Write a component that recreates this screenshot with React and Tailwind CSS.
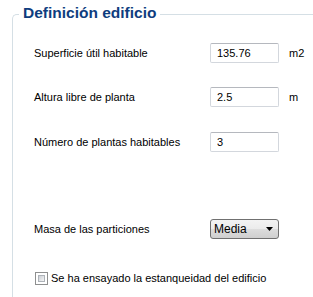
import React from 'react'

const font = { fontFamily: '"Liberation Sans", Arial, sans-serif' };

const Field = ({ label, value, unit, className = '' }) => (
  <div className={`flex items-center h-[20px] ${className}`}>
    <span className="w-[176px] shrink-0 text-[11px] text-black">{label}</span>
    <input
      readOnly
      value={value}
      className="w-[69px] h-[20px] px-[6px] text-[11px] text-black bg-white border border-[#d3d7dd] border-t-[#b5b8be] rounded-[2px] outline-none"
      style={font}
    />
    {unit && <span className="ml-[10px] text-[11px] text-black">{unit}</span>}
  </div>
);

export default function App() {
  return (
    <div className="w-[313px] h-[297px] overflow-hidden bg-white" style={font}>
      <div className="ml-[12px] mt-[14px] h-[300px] border-l border-t border-[#d5dfe5] rounded-tl-[5px]">
        <div className="-mt-[11px] ml-[6px] px-[4px] w-fit bg-white text-[15.5px] leading-[18px] font-bold text-[#0e3d7e]">
          Definición edificio
        </div>

        <div className="pl-[21px] pt-[21px]">
          <Field label="Superficie útil habitable" value="135.76" unit="m2" />
          <Field label="Altura libre de planta" value="2.5" unit="m" className="mt-[24px]" />
          <Field label="Número de plantas habitables" value="3" className="mt-[25px]" />

          <div className="flex items-center h-[20px] mt-[67px]">
            <span className="w-[176px] shrink-0 text-[11px] text-black">Masa de las particiones</span>
            <div className="w-[69px] h-[20px] flex items-center justify-between pl-[3px] pr-[5px] border border-[#707070] rounded-[3px] bg-[linear-gradient(to_bottom,#f3f3f3_0%,#ebebeb_50%,#dddddd_51%,#cfcfcf_100%)]">
              <span className="text-[12px] text-black">Media</span>
              <svg width="7" height="4" viewBox="0 0 7 4">
                <path d="M0 0 L7 0 L3.5 4 Z" fill="#000" />
              </svg>
            </div>
          </div>

          <label className="flex items-center h-[13px] mt-[33px] ml-[1px]">
            <span className="w-[13px] h-[13px] border border-[#8e8f8f] bg-white p-[2px] shrink-0">
              <span className="block w-full h-full bg-[linear-gradient(135deg,#cbcfd5,#f6f6f6)] border border-[#aeb3b9]" />
            </span>
            <span className="ml-[3px] text-[11px] text-black">Se ha ensayado la estanqueidad del edificio</span>
          </label>
        </div>
      </div>
    </div>
  );
}
